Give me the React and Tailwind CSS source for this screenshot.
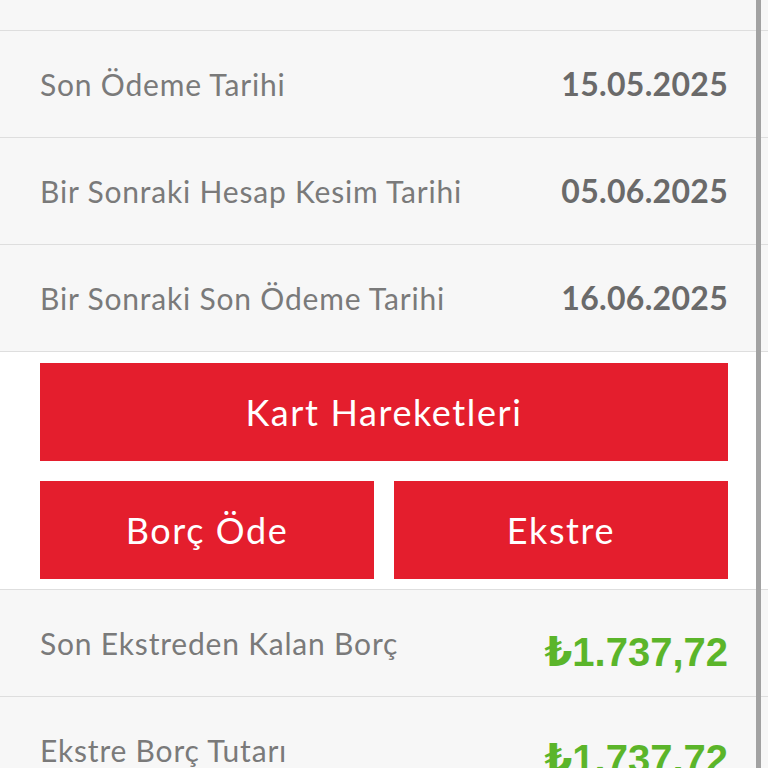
import React from "react";

const dates = [
  { label: "Son Ödeme Tarihi", value: "15.05.2025" },
  { label: "Bir Sonraki Hesap Kesim Tarihi", value: "05.06.2025" },
  { label: "Bir Sonraki Son Ödeme Tarihi", value: "16.06.2025" },
];

const amounts = [
  { label: "Son Ekstreden Kalan Borç", value: "₺1.737,72" },
  { label: "Ekstre Borç Tutarı", value: "₺1.737,72" },
];

function Row({ label, children }) {
  return (
    <div className="flex h-[107px] items-center justify-between border-b border-[#dedede] bg-[#f7f7f7] px-10">
      <span className="text-[30px] tracking-[0.8px] text-[#7a7a7a] [font-family:Lato,'Noto_Sans',sans-serif]">{label}</span>
      {children}
    </div>
  );
}

export default function App() {
  return (
    <div className="relative min-h-screen w-full overflow-hidden bg-white">
      <div className="h-[31px] border-b border-[#dedede] bg-[#f7f7f7]" />

      {dates.map((d) => (
        <Row key={d.label} label={d.label}>
          <span className="text-[32px] font-bold tracking-[0.3px] text-[#6a6a6a] [font-family:Lato,'Noto_Sans',sans-serif]">{d.value}</span>
        </Row>
      ))}

      <div className="flex flex-col gap-5 border-b border-[#dedede] bg-white px-10 pb-[10px] pt-[11px]">
        <button className="flex h-[98px] items-center justify-center bg-[#e41e2d] text-[36px] tracking-[1.6px] text-white [font-family:Lato,'Noto_Sans',sans-serif]">
          Kart Hareketleri
        </button>
        <div className="grid grid-cols-2 gap-5">
          <button className="flex h-[98px] items-center justify-center bg-[#e41e2d] text-[36px] tracking-[1.6px] text-white [font-family:Lato,'Noto_Sans',sans-serif]">
            Borç Öde
          </button>
          <button className="flex h-[98px] items-center justify-center bg-[#e41e2d] text-[36px] tracking-[1.6px] text-white [font-family:Lato,'Noto_Sans',sans-serif]">
            Ekstre
          </button>
        </div>
      </div>

      {amounts.map((a) => (
        <Row key={a.label} label={a.label}>
          <span className="mt-[18px] text-[40px] font-bold text-[#5bb52a] [font-family:'Liberation_Sans','DejaVu_Sans',sans-serif]">{a.value}</span>
        </Row>
      ))}

      <div className="pointer-events-none absolute bottom-0 right-[7px] top-0 w-[5px] bg-[#a2a2a2]" />
    </div>
  );
}
